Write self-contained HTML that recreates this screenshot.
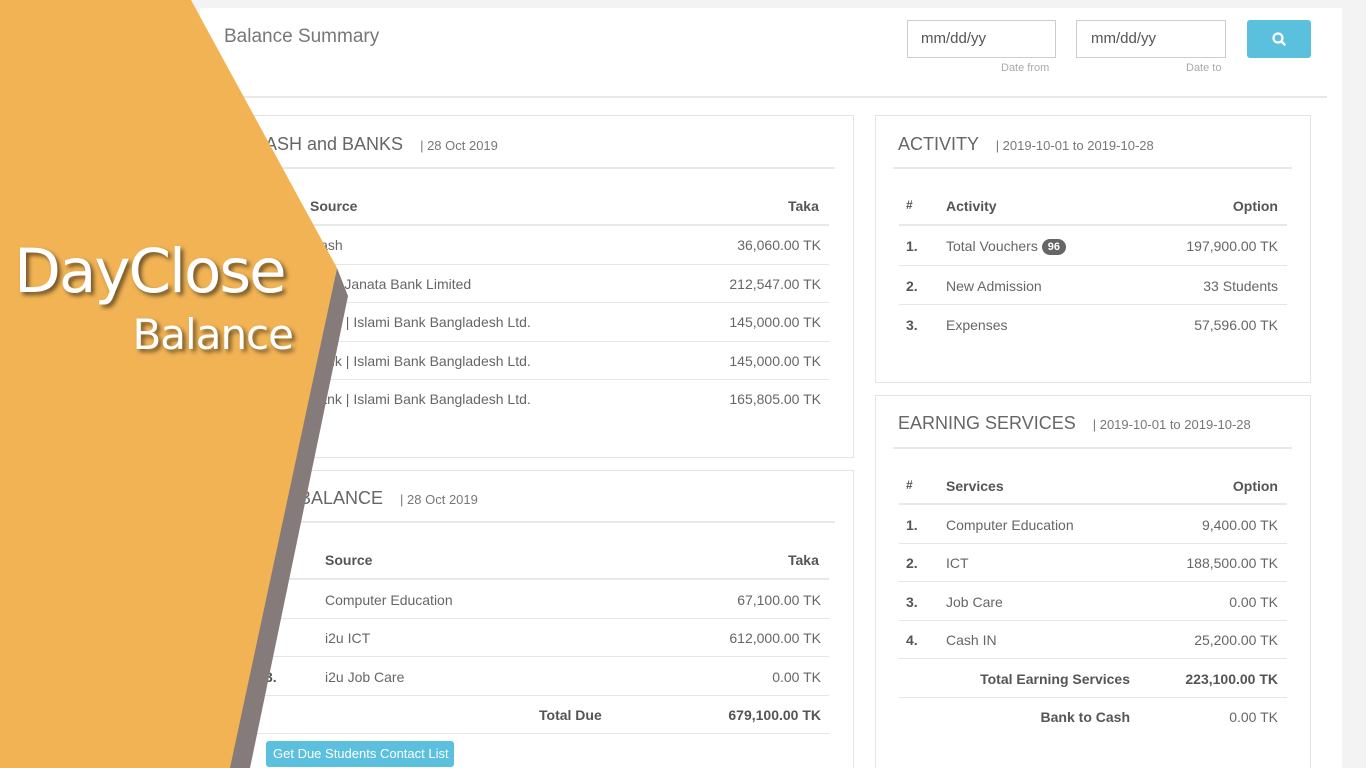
<!DOCTYPE html>
<html><head><meta charset="utf-8"><style>
*{margin:0;padding:0;box-sizing:border-box}
html,body{width:1366px;height:768px;overflow:hidden}
body{background:#f3f3f3;font-family:"Liberation Sans",sans-serif;color:#666;position:relative}
.a{position:absolute;white-space:nowrap}
.panel{position:absolute;background:#fff;border:1px solid #e4e4e4}
.hl{position:absolute;height:2px;background:#e8e8e8}
.l{position:absolute;height:1px;background:#e6e6e6}
.t{font-size:14px;color:#666}
.b{font-weight:bold;color:#555}
.r{text-align:right}
.h{font-size:18px;color:#666}
.s{font-size:13px;color:#777}
</style></head><body>
<div class="a" style="left:200px;top:8px;width:1142px;height:760px;background:#fff"></div>
<div class="a" style="left:224px;top:26px;font-size:19px;color:#777">Balance Summary</div>
<div class="a" style="left:907px;top:20px;width:149px;height:38px;border:1px solid #ccc;font-size:15px;color:#555;padding:9px 13px">mm/dd/yy</div>
<div class="a" style="left:1076px;top:20px;width:150px;height:38px;border:1px solid #ccc;font-size:15px;color:#555;padding:9px 14px">mm/dd/yy</div>
<div class="a s" style="left:1001px;top:62px;font-size:11px;color:#aaa">Date from</div>
<div class="a s" style="left:1186px;top:62px;font-size:11px;color:#aaa">Date to</div>
<div class="a" style="left:1247px;top:20px;width:64px;height:38px;background:#5bc0de;border-radius:3px">
<svg width="64" height="38"><circle cx="31" cy="18" r="4.5" fill="none" stroke="#fff" stroke-width="2.2"/><line x1="34.5" y1="21.5" x2="37.5" y2="24.5" stroke="#fff" stroke-width="2.5" stroke-linecap="round"/></svg></div>
<div class="hl" style="left:200px;top:96px;width:1127px"></div>

<!-- panel 1 -->
<div class="panel" style="left:215px;top:115px;width:639px;height:343px"></div>
<div class="a h" style="left:252px;top:134px">CASH and BANKS <span class="s" style="margin-left:12px">| 28 Oct 2019</span></div>
<div class="hl" style="left:235px;top:167px;width:600px"></div>
<div class="a t b" style="left:310px;top:198px">Source</div><div class="a t b" style="left:788px;top:198px">Taka</div>
<div class="hl" style="left:240px;top:224px;width:589px"></div>
<div class="a t" style="left:310px;top:237px">Cash</div><div class="a t r" style="right:545px;top:237px">36,060.00 TK</div>
<div class="l" style="left:240px;top:264px;width:589px"></div>
<div class="a t" style="left:301px;top:276px">Bank | Janata Bank Limited</div><div class="a t r" style="right:545px;top:276px">212,547.00 TK</div>
<div class="l" style="left:240px;top:302px;width:589px"></div>
<div class="a t" style="left:310px;top:314px">Bank | Islami Bank Bangladesh Ltd.</div><div class="a t r" style="right:545px;top:314px">145,000.00 TK</div>
<div class="l" style="left:240px;top:341px;width:589px"></div>
<div class="a t" style="left:310px;top:353px">Bank | Islami Bank Bangladesh Ltd.</div><div class="a t r" style="right:545px;top:353px">145,000.00 TK</div>
<div class="l" style="left:240px;top:379px;width:589px"></div>
<div class="a t" style="left:310px;top:391px">Bank | Islami Bank Bangladesh Ltd.</div><div class="a t r" style="right:545px;top:391px">165,805.00 TK</div>

<!-- panel 2 -->
<div class="panel" style="left:215px;top:470px;width:639px;height:310px"></div>
<div class="a h" style="left:256px;top:488px">DUE BALANCE <span class="s" style="margin-left:12px">| 28 Oct 2019</span></div>
<div class="hl" style="left:235px;top:521px;width:600px"></div>
<div class="a t b" style="left:325px;top:552px">Source</div><div class="a t b" style="left:788px;top:552px">Taka</div>
<div class="hl" style="left:240px;top:578px;width:589px"></div>
<div class="a t b" style="left:265px;top:592px">1.</div><div class="a t" style="left:325px;top:592px">Computer Education</div><div class="a t r" style="right:545px;top:592px">67,100.00 TK</div>
<div class="l" style="left:240px;top:618px;width:589px"></div>
<div class="a t b" style="left:265px;top:630px">2.</div><div class="a t" style="left:325px;top:630px">i2u ICT</div><div class="a t r" style="right:545px;top:630px">612,000.00 TK</div>
<div class="l" style="left:240px;top:656px;width:589px"></div>
<div class="a t b" style="left:265px;top:669px">3.</div><div class="a t" style="left:325px;top:669px">i2u Job Care</div><div class="a t r" style="right:545px;top:669px">0.00 TK</div>
<div class="l" style="left:240px;top:695px;width:589px"></div>
<div class="a t b" style="left:539px;top:707px">Total Due</div><div class="a t b r" style="right:545px;top:707px">679,100.00 TK</div>
<div class="l" style="left:240px;top:733px;width:589px"></div>
<div class="a" style="left:266px;top:741px;width:188px;height:26px;background:#5bc0de;border-radius:3px;color:#fff;font-size:13px;padding:5px 7px">Get Due Students Contact List</div>

<!-- panel 3 -->
<div class="panel" style="left:875px;top:115px;width:436px;height:268px"></div>
<div class="a h" style="left:898px;top:134px">ACTIVITY <span class="s" style="margin-left:12px">| 2019-10-01 to 2019-10-28</span></div>
<div class="hl" style="left:893px;top:167px;width:399px"></div>
<div class="a t b" style="left:906px;top:198px;font-size:12px">#</div><div class="a t b" style="left:946px;top:198px">Activity</div><div class="a t b r" style="right:88px;top:198px">Option</div>
<div class="hl" style="left:899px;top:224px;width:388px"></div>
<div class="a t b" style="left:906px;top:238px">1.</div><div class="a t" style="left:946px;top:238px">Total Vouchers <span style="display:inline-block;background:#666;color:#fff;font-size:11px;font-weight:bold;border-radius:9px;padding:2px 6px;vertical-align:1px">96</span></div><div class="a t r" style="right:88px;top:238px">197,900.00 TK</div>
<div class="l" style="left:899px;top:265px;width:388px"></div>
<div class="a t b" style="left:906px;top:278px">2.</div><div class="a t" style="left:946px;top:278px">New Admission</div><div class="a t r" style="right:88px;top:278px">33 Students</div>
<div class="l" style="left:899px;top:304px;width:388px"></div>
<div class="a t b" style="left:906px;top:317px">3.</div><div class="a t" style="left:946px;top:317px">Expenses</div><div class="a t r" style="right:88px;top:317px">57,596.00 TK</div>

<!-- panel 4 -->
<div class="panel" style="left:875px;top:395px;width:436px;height:390px"></div>
<div class="a h" style="left:898px;top:413px">EARNING SERVICES <span class="s" style="margin-left:12px">| 2019-10-01 to 2019-10-28</span></div>
<div class="hl" style="left:893px;top:447px;width:399px"></div>
<div class="a t b" style="left:906px;top:478px;font-size:12px">#</div><div class="a t b" style="left:946px;top:478px">Services</div><div class="a t b r" style="right:88px;top:478px">Option</div>
<div class="hl" style="left:899px;top:503px;width:388px"></div>
<div class="a t b" style="left:906px;top:517px">1.</div><div class="a t" style="left:946px;top:517px">Computer Education</div><div class="a t r" style="right:88px;top:517px">9,400.00 TK</div>
<div class="l" style="left:899px;top:543px;width:388px"></div>
<div class="a t b" style="left:906px;top:555px">2.</div><div class="a t" style="left:946px;top:555px">ICT</div><div class="a t r" style="right:88px;top:555px">188,500.00 TK</div>
<div class="l" style="left:899px;top:581px;width:388px"></div>
<div class="a t b" style="left:906px;top:594px">3.</div><div class="a t" style="left:946px;top:594px">Job Care</div><div class="a t r" style="right:88px;top:594px">0.00 TK</div>
<div class="l" style="left:899px;top:620px;width:388px"></div>
<div class="a t b" style="left:906px;top:632px">4.</div><div class="a t" style="left:946px;top:632px">Cash IN</div><div class="a t r" style="right:88px;top:632px">25,200.00 TK</div>
<div class="l" style="left:899px;top:658px;width:388px"></div>
<div class="a t b r" style="right:236px;top:671px">Total Earning Services</div><div class="a t b r" style="right:88px;top:671px">223,100.00 TK</div>
<div class="l" style="left:899px;top:697px;width:388px"></div>
<div class="a t b r" style="right:236px;top:709px">Bank to Cash</div><div class="a t r" style="right:88px;top:709px">0.00 TK</div>

<!-- overlay -->
<svg class="a" style="left:0;top:0" width="400" height="768">
<polygon points="337,268 348,296 250,768 228,768" fill="#857b7a"/>
<polygon points="0,0 191,0 337,268 230,768 0,768" fill="#f1b354"/>
</svg>
<div class="a" style="left:14px;top:236px;font-size:61px;color:#fff;text-shadow:3px 3px 4px rgba(0,0,0,.55);font-family:'DejaVu Sans',sans-serif;letter-spacing:-2px">DayClose</div>
<div class="a" style="right:1073px;top:310px;font-size:42px;color:#fff;text-shadow:3px 3px 4px rgba(0,0,0,.55);font-family:'DejaVu Sans',sans-serif;letter-spacing:-1px">Balance</div>
</body></html>
